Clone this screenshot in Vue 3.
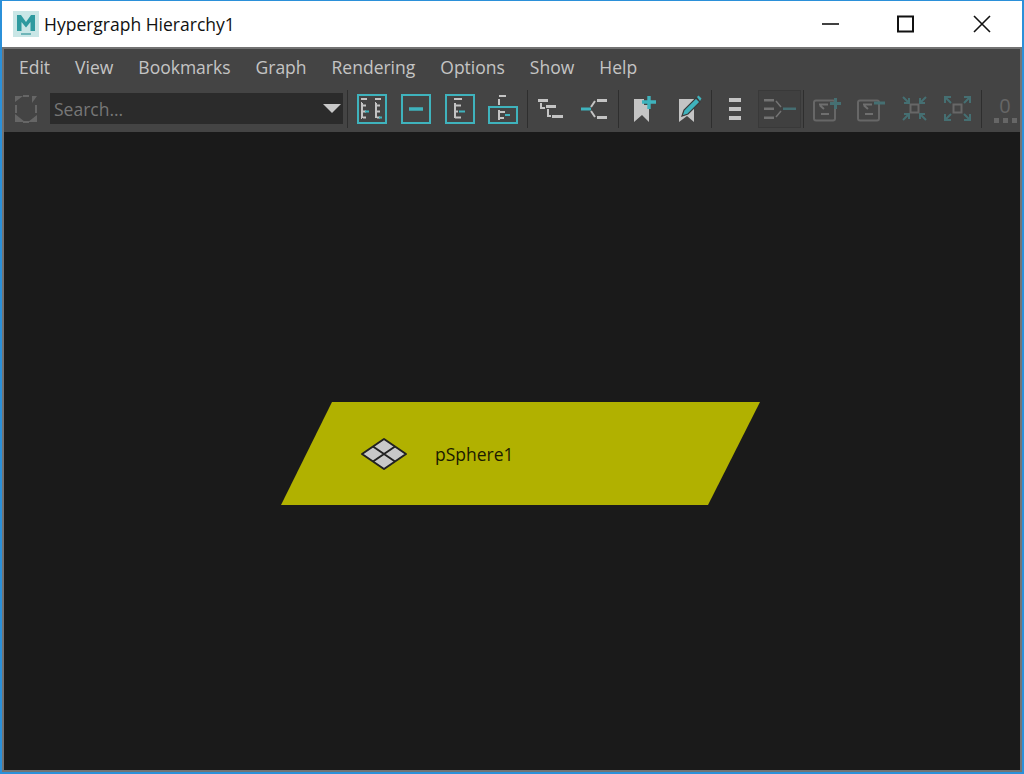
<template>
  <div class="window">
    <header class="titlebar">
      <svg class="app-logo" viewBox="0 0 26 26">
        <rect width="26" height="26" fill="#c9e6e6" />
        <path d="M4 20V4h4l5 7 5-7h4v16h-4.500V11L13 16.500 8.500 11v9z" fill="#2e9a9f" />
        <rect x="8" y="22" width="10" height="2" fill="#6fb5b8" />
      </svg>
      <span class="titlebar__text">Hypergraph Hierarchy1</span>
      <div class="titlebar__controls">
        <svg viewBox="0 0 76 46" class="winbtn"><path d="M30 23h17" stroke="#111" stroke-width="1.600" fill="none" /></svg>
        <svg viewBox="0 0 76 46" class="winbtn"><rect x="30" y="15.500" width="15" height="15" stroke="#111" stroke-width="2" fill="none" /></svg>
        <svg viewBox="0 0 76 46" class="winbtn"><path d="M30 15l16 16M46 15L30 31" stroke="#111" stroke-width="1.600" fill="none" /></svg>
      </div>
    </header>

    <div class="frame">
      <nav class="menubar">
        <span v-for="item in menu" :key="item">{{ item }}</span>
      </nav>

      <div class="toolbar">
        <svg class="icon icon--frame" width="24" height="28" viewBox="0 0 24 28">
          <g fill="#666">
            <path d="M0 2l8 5-8 5zM24 2l-8 5 8 5zM0 26l8-5-8-5zM24 26l-8-5 8-5z" opacity="0" />
            <path d="M1 1h8l-8 6zM23 1h-5v7zM1 27v-8l10 8zM23 27h-9l9-7z" />
            <path d="M1 10h2v8H1zM21 10h2v8h-2zM9 0h6v2H9zM9 26h6v2H9z" />
          </g>
        </svg>
        <div class="search">
          <span class="search__text">Search...</span>
          <span class="search__arrow"></span>
        </div>

        <i class="sep sep--first"></i>

        <svg class="icon" style="margin-left:9px" width="30" height="30" viewBox="0 0 30 30">
          <rect x="1" y="1" width="28" height="28" class="teal-line" />
          <path d="M4 5h6M4 9h1M4 12h1M4 15h1M4 18h1M4 21h1M4 24h1M5 9v15M6 11.500h3M6 17.500h3M6 23.500h3M18 5h6M18 9h1M19 9v15M20 11.500h3M20 17.500h3M20 23.500h3" class="grey-line" />
          <path d="M8 17.500h4M22 23.500h3" class="teal-thick" />
        </svg>
        <svg class="icon" style="margin-left:14px" width="30" height="30" viewBox="0 0 30 30">
          <rect x="1" y="1" width="28" height="28" class="teal-line" />
          <path d="M8 15h14" class="teal-thick teal-thick--big" />
        </svg>
        <svg class="icon" style="margin-left:14px" width="30" height="30" viewBox="0 0 30 30">
          <rect x="1" y="1" width="28" height="28" class="teal-line" />
          <path d="M9 5h8M10 9v15M10 11.500h6M10 23.500h6" class="grey-line" />
          <path d="M10 17.500h3" class="grey-line" />
          <path d="M14 17.500h6" class="teal-thick" />
        </svg>
        <svg class="icon" style="margin-left:13px" width="30" height="30" viewBox="0 0 30 30">
          <path d="M11 2h7M11 5v6" class="grey-line" />
          <rect x="1" y="13" width="28" height="16" class="teal-line" />
          <path d="M11 16v10M11 18h6M11 24h5" class="grey-line" />
          <path d="M17 21h5" class="teal-thick" />
        </svg>

        <i class="sep" style="margin-left:9px"></i>

        <svg class="icon" style="margin-left:10px" width="25" height="22" viewBox="0 0 25 22">
          <path d="M0 1h10v3H0zM8 7h10v3H8zM14 17h11v3H14z" fill="#c4c4c4" />
          <path d="M3 5v5h4M10 11v7h3" class="grey-line" />
        </svg>
        <svg class="icon" style="margin-left:18px" width="26" height="22" viewBox="0 0 26 22">
          <path d="M0 9.500h10v3H0z" fill="#3fb3bd" />
          <path d="M16 1h10v3H16zM16 18h10v3H16z" fill="#c4c4c4" />
          <path d="M14 3l-4 6M10 13l4 6" class="grey-line" />
        </svg>

        <i class="sep" style="margin-left:11px"></i>

        <svg class="icon" style="margin-left:15px" width="23" height="26" viewBox="0 0 23 26">
          <path d="M0 3h10v6h5v17l-7-7-8 7z" fill="#c4c4c4" />
          <path d="M8 6h14M15 0v13" stroke="#3fb3bd" stroke-width="3.400" fill="none" />
        </svg>
        <svg class="icon" style="margin-left:22px" width="23" height="27" viewBox="0 0 23 27">
          <path d="M0 4h15v23l-7-6-8 6z" fill="#c4c4c4" />
          <path d="M3 21l2-6L17 3l4 4L9 19z" fill="#3fb3bd" stroke="#3a3a3a" stroke-width="1.200" />
          <path d="M18 2l1.500-1.500 3 3L21 6z" fill="#3fb3bd" />
        </svg>

        <i class="sep" style="margin-left:9px"></i>

        <svg class="icon" style="margin-left:17px" width="12" height="22" viewBox="0 0 12 22">
          <path d="M0 0h12v4H0zM0 9h12v4H0zM0 18h12v4H0z" fill="#c4c4c4" />
        </svg>

        <div class="pressed">
          <svg class="icon icon--off" width="34" height="24" viewBox="0 0 34 24">
            <path d="M1 2h10v2.500H1zM1 10.500h10V13H1zM1 19.500h10V22H1z" fill="#7d7d7d" />
            <path d="M13 4l5 6M13 20l5-6" stroke="#7d7d7d" stroke-width="1.500" />
            <path d="M20 10.500h13V13H20z" fill="#46777b" />
          </svg>
        </div>

        <i class="sep" style="margin-left:2px"></i>

        <svg class="icon icon--off" style="margin-left:9px" width="28" height="26" viewBox="0 0 28 26">
          <rect x="1" y="4.500" width="21" height="20" rx="2" class="dim-line" />
          <path d="M6 8.500h9M7 9.500l4 3.500M8 18h8" stroke="#777" stroke-width="2" fill="none" />
          <path d="M17 7.500h11M22.500 2v11" stroke="#46777b" stroke-width="3" fill="none" />
        </svg>
        <svg class="icon icon--off" style="margin-left:16px" width="28" height="26" viewBox="0 0 28 26">
          <rect x="1" y="4.500" width="21" height="20" rx="2" class="dim-line" />
          <path d="M6 8.500h9M7 9.500l4 3.500M8 18h8" stroke="#777" stroke-width="2" fill="none" />
          <path d="M17 7h11" stroke="#46777b" stroke-width="3" fill="none" />
        </svg>
        <svg class="icon icon--off" style="margin-left:17px" width="25" height="25" viewBox="0 0 25 25">
          <rect x="8.500" y="8.500" width="8" height="8" class="dim-line" />
          <path d="M1 1l6 6M24 1l-6 6M1 24l6-6M24 24l-6-6" class="dim-teal" />
          <path d="M7 2v5H2M18 2v5h5M7 23v-5H2M18 23v-5h5" class="dim-teal" />
        </svg>
        <svg class="icon icon--off" style="margin-left:17px" width="27" height="25" viewBox="0 0 27 25">
          <rect x="9.500" y="8.500" width="8" height="8" class="dim-line" />
          <path d="M1 1l6 6M26 1l-6 6M1 24l6-6M26 24l-6-6" class="dim-teal" />
          <path d="M1 7V1h6M26 7V1h-6M1 18v6h6M26 18v6h-6" class="dim-teal" />
        </svg>

        <i class="sep" style="margin-left:10px"></i>

        <div class="counter">
          <span class="counter__num">0</span>
          <span class="counter__dots"><i></i><i></i><i></i></span>
        </div>
      </div>

      <main class="canvas">
        <div class="node">
          <svg class="node__icon" width="50" height="34" viewBox="0 0 50 34">
            <path d="M25 2l22 15-22 15L3 17z" fill="#c8c8c8" stroke="#222" stroke-width="2" stroke-linejoin="round" />
            <path d="M14 9.500l22 15M36 9.500l-22 15" stroke="#222" stroke-width="2" fill="none" />
          </svg>
          <span class="node__label">pSphere1</span>
        </div>
      </main>
    </div>
  </div>
</template>

<script setup>
const menu = ['Edit', 'View', 'Bookmarks', 'Graph', 'Rendering', 'Options', 'Show', 'Help']
</script>

<style>
body {
  margin: 0;
  background: #2b90d9;
}
</style>

<style scoped>
.window {
  width: 1024px;
  height: 774px;
  box-sizing: border-box;
  display: flex;
  flex-direction: column;
  border: 2px solid #2b90d9;
  border-top-width: 1px;
  overflow: hidden;
  font-family: "Open Sans", "Noto Sans", sans-serif;
}

.titlebar {
  height: 46px;
  flex: none;
  display: flex;
  align-items: center;
  background: #fff;
  padding-left: 11px;
}

.app-logo {
  width: 26px;
  height: 26px;
  margin-top: -1px;
}

.titlebar__text {
  margin-left: 5px;
  font-size: 17.500px;
  color: #111;
  margin-top: -1px;
}

.titlebar__controls {
  margin-left: auto;
  display: flex;
  margin-right: 2px;
}

.winbtn {
  width: 76px;
  height: 46px;
  display: block;
}

.frame {
  flex: 1;
  min-height: 0;
  display: flex;
  flex-direction: column;
  background: #444;
  border: 2px solid #737373;
  border-width: 2px 2px 2px 2px;
}

.menubar {
  height: 36px;
  flex: none;
  display: flex;
  align-items: center;
  gap: 25px;
  padding-left: 15px;
  font-size: 17.500px;
  color: #c4c4c4;
}

.toolbar {
  height: 47px;
  flex: none;
  display: flex;
  align-items: center;
  padding-left: 10px;
}

.icon {
  display: block;
  flex: none;
}

.icon--off {
  opacity: 0.85;
}

.search {
  margin-left: 12px;
  width: 293px;
  height: 31px;
  background: #2b2b2b;
  display: flex;
  align-items: center;
  justify-content: space-between;
  padding: 0 2px 0 4px;
  box-sizing: border-box;
}

.search__text {
  font-size: 17.500px;
  color: #777;
}

.search__arrow {
  width: 0;
  height: 0;
  border-left: 9.500px solid transparent;
  border-right: 9.500px solid transparent;
  border-top: 9px solid #c8c8c8;
}

.sep {
  flex: none;
  width: 1px;
  height: 38px;
  background: #2e2e2e;
  margin-left: 4px;
}

.teal-line {
  fill: none;
  stroke: #3fb3bd;
  stroke-width: 2;
}

.grey-line {
  fill: none;
  stroke: #c4c4c4;
  stroke-width: 2;
}

.teal-thick {
  fill: none;
  stroke: #3fb3bd;
  stroke-width: 2;
}

.teal-thick--big {
  stroke-width: 3.500;
}

.dim-line {
  fill: none;
  stroke: #6e6e6e;
  stroke-width: 2;
}

.dim-teal {
  fill: none;
  stroke: #46777b;
  stroke-width: 2;
}

.pressed {
  margin-left: 17px;
  width: 43px;
  height: 38px;
  box-sizing: border-box;
  border: 1px solid #393939;
  background: #404040;
  display: flex;
  align-items: center;
  justify-content: center;
}

.counter {
  margin-left: 10px;
  width: 26px;
  display: flex;
  flex-direction: column;
  align-items: center;
}

.counter__num {
  font-size: 20px;
  line-height: 24px;
  color: #666;
}

.counter__dots {
  display: flex;
  gap: 4px;
}

.counter__dots i {
  width: 5px;
  height: 5px;
  background: #666;
}

.canvas {
  flex: 1;
  min-height: 0;
  position: relative;
  background: #1a1a1a;
}

/* node sits on the free canvas */
.node {
  position: absolute;
  left: 277px;
  top: 270px;
  width: 479px;
  height: 103px;
  background: #b1b100;
  clip-path: polygon(51px 0, 100% 0, 427px 100%, 0 100%);
  display: flex;
  align-items: center;
}

.node__icon {
  margin-left: 78px;
}

.node__label {
  margin-left: 26px;
  font-size: 17.500px;
  color: #1b1b00;
}
</style>
